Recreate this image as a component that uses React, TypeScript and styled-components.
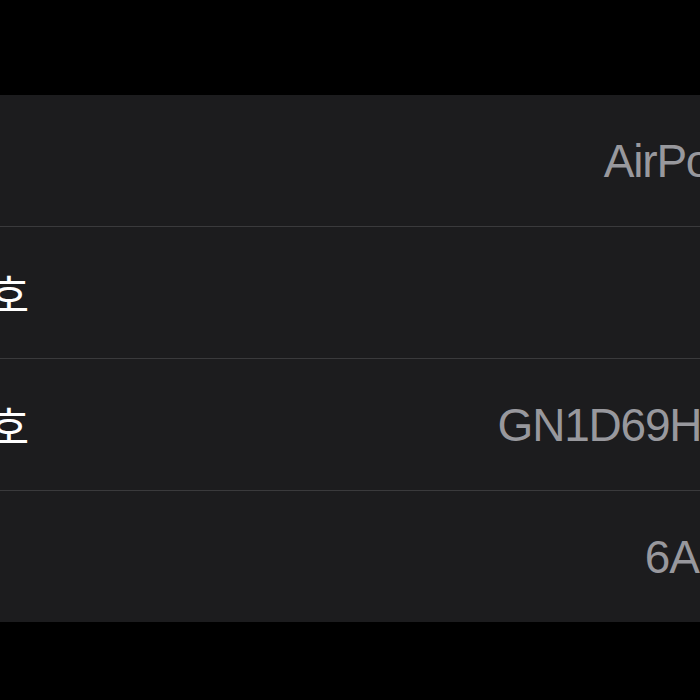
import React from "react";
import styled, { createGlobalStyle } from "styled-components";

const Global = createGlobalStyle`
  html, body {
    margin: 0;
    padding: 0;
    background: #000;
    overflow: hidden;
  }
`;

const Screen = styled.div`
  width: 700px;
  height: 700px;
  background: #000;
  padding-top: 95px;
  box-sizing: border-box;
  overflow: hidden;
`;

const List = styled.div`
  margin-left: -165px;
  margin-right: -156px;
  background: #1c1c1e;
`;

const Row = styled.div<{ $first?: boolean }>`
  height: 131px;
  padding: 0 20px;
  display: flex;
  align-items: center;
  justify-content: space-between;
  border-top: ${(p) => (p.$first ? "none" : "1px solid #3a3a3c")};
`;

const Label = styled.span`
  font-family: "Liberation Sans", "Noto Sans CJK KR", sans-serif;
  font-size: 44px;
  color: #ffffff;
  white-space: nowrap;
`;

const Value = styled.span`
  font-family: "Liberation Sans", "Noto Sans CJK KR", sans-serif;
  font-size: 46px;
  letter-spacing: -1.2px;
  color: #98989d;
  white-space: nowrap;
`;

const rows = [
  { label: "이름", value: "AirPods Pro" },
  { label: "모델 번호", value: "A2084" },
  { label: "일련 번호", value: "GN1D69H1LKKT" },
  { label: "버전", value: "6A321 (1)" },
];

export default function App() {
  return (
    <>
      <Global />
      <Screen>
        <List>
          {rows.map((r, i) => (
            <Row key={r.label} $first={i === 0}>
              <Label>{r.label}</Label>
              <Value>{r.value}</Value>
            </Row>
          ))}
        </List>
      </Screen>
    </>
  );
}
